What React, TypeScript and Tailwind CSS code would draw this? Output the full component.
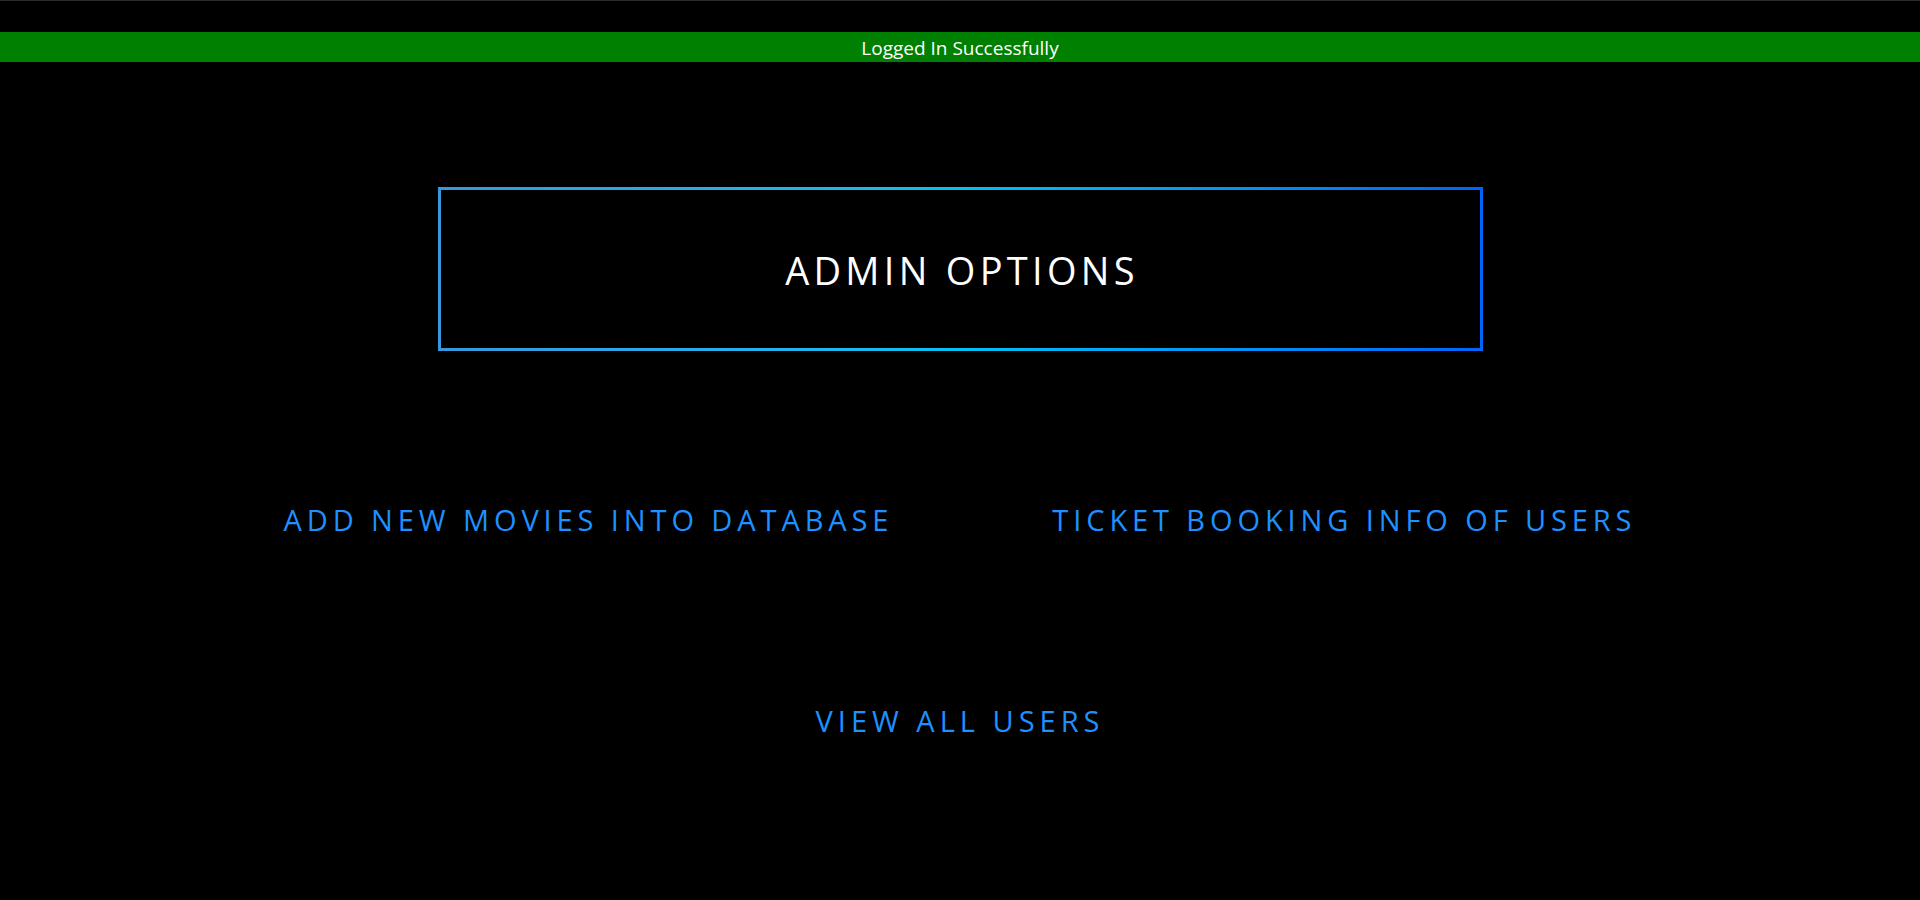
export default function App() {
  return (
    <div className="min-h-screen bg-black font-['Open_Sans',sans-serif] border-t border-[#2b2b2b]">
      <div className="mt-[31px] h-[30px] pt-[2px] bg-[#008000] flex items-center justify-center text-white text-[19px] leading-none">
        Logged In Successfully
      </div>

      <div className="mt-[125px] mx-auto w-[1045px] h-[164px] p-[3px] bg-linear-to-r from-[#3698dc] via-[#00c2f2] to-[#0064f8]">
        <div className="h-full bg-black flex items-center justify-center">
          <h1 className="text-white text-[38px] tracking-[4.3px] font-normal pl-[4px] pt-[2px]">ADMIN OPTIONS</h1>
        </div>
      </div>

      <div className="mt-[149px] flex justify-center gap-[159px]">
        <a className="text-[#1e90ff] text-[29px] leading-[40px] tracking-[4.9px] cursor-pointer">
          ADD NEW MOVIES INTO DATABASE
        </a>
        <a className="text-[#1e90ff] text-[29px] leading-[40px] tracking-[4.9px] cursor-pointer">
          TICKET BOOKING INFO OF USERS
        </a>
      </div>

      <div className="mt-[161px] flex justify-center">
        <a className="text-[#1e90ff] text-[29px] leading-[40px] tracking-[5px] cursor-pointer">VIEW ALL USERS</a>
      </div>
    </div>
  );
}
